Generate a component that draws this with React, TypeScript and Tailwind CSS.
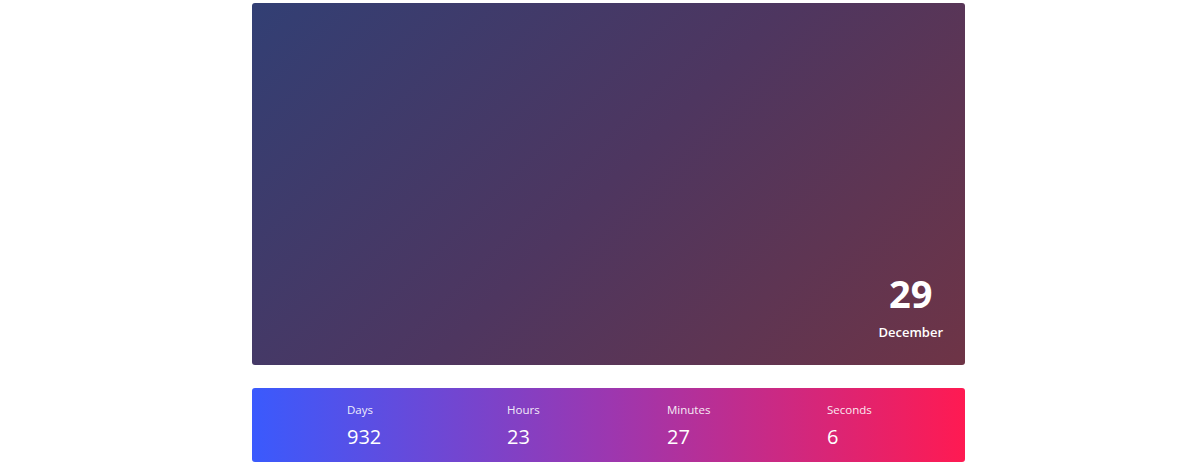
export default function App() {
  const items = [
    { label: "Days", value: "932" },
    { label: "Hours", value: "23" },
    { label: "Minutes", value: "27" },
    { label: "Seconds", value: "6" },
  ];
  return (
    <div className="w-[1200px] h-[464px] bg-white flex flex-col items-start pl-[252px] pt-[3px]" style={{ fontFamily: '"Open Sans", sans-serif' }}>
      <div className="w-[713px] h-[362px] rounded-[3px] bg-[linear-gradient(135deg,#323f74_0%,#4e3660_50%,#6e3446_100%)] flex items-end justify-end pr-[22px] pb-[24px]">
        <div className="flex flex-col items-center text-white">
          <div className="text-[38px] font-bold leading-[40px]">29</div>
          <div className="text-[13px] font-semibold leading-[18px] mt-[10px]">December</div>
        </div>
      </div>
      <div className="mt-[23px] w-[713px] h-[74px] rounded-[3px] bg-[linear-gradient(90deg,#3a5afd_0%,#9c37b0_50%,#ff1a52_100%)] flex items-center pl-[95px] pt-[2px] overflow-hidden">
        {items.map((it) => (
          <div key={it.label} className="w-[160px] shrink-0 flex flex-col text-white">
            <div className="text-[11.5px] leading-[16px] opacity-90">{it.label}</div>
            <div className="text-[20px] leading-[26px] mt-[6px]">{it.value}</div>
          </div>
        ))}
      </div>
    </div>
  );
}
